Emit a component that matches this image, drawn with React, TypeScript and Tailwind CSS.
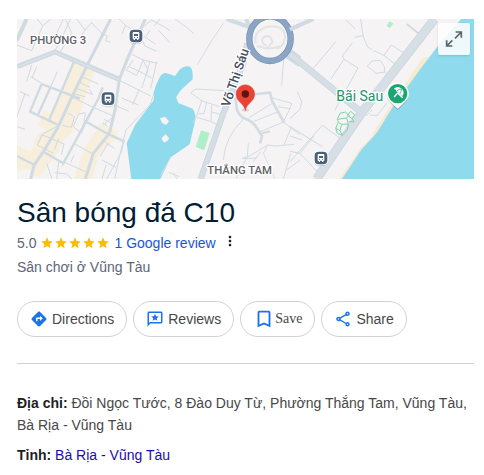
import React, { useState } from 'react';
import { MdBookmarkBorder, MdDirections, MdMoreVert, MdOutlineShare, MdStar } from 'react-icons/md';

const actionClass =
  "inline-flex h-9 items-center rounded-full border border-[#d2d2d2] bg-white px-3 text-sm text-[#474747] hover:bg-gray-50";

const BusStop = ({ x, y }: { x: number; y: number }) => (
  <g transform={`translate(${x} ${y})`} stroke="none">
    <rect x="-21" y="-18" width="42" height="42" rx="13" fill="#000" opacity="0.16" />
    <rect x="-22" y="-22" width="44" height="44" rx="14" fill="#fff" />
    <rect x="-19" y="-19" width="38" height="38" rx="12" fill="#4a6078" />
    <path d="M-10 -9q0 -3 3 -3h14q3 0 3 3v17h-3v4h-4v-4h-6v4h-4v-4h-3z" fill="#fff" />
    <path d="M-6 -6h12v6h-12zM-6 4h3v2h-3zM3 4h3v2h-3z" fill="#4a6078" />
  </g>
);

// Drawn on a grid of three units per pixel, in three side by side sections
const PlaceMap = () => (
  <svg
    viewBox="0 0 1371 480"
    preserveAspectRatio="xMidYMid slice"
    className="block h-40 w-full bg-[#f5f3f4]"
    role="img"
    aria-label="Sân bóng đá C10"
  >
    {/* West: Phường 3 */}
    <g transform="translate(-51 -27)" fill="none" stroke="#d0dae1" strokeLinejoin="round">
      <g fill="#f7efdc" stroke="none">
        <path d="M222 158L285 184L272 215L252 270L238 318L212 308L226 330L216 372L190 390L172 428L132 484L118 501L92 495L100 476L51 482V407L92 424L112 376L140 358L116 346L130 300L158 310L190 245Z" />
        <path d="M300 342L355 362L344 390L318 410L296 436L276 507H224L240 452L258 408L280 374Z" />
      </g>
      <g strokeWidth="3">
        <path d="M51 105L95 122L128 48L112 27M80 27L51 96M128 48L152 27M128 85L160 92L190 27M196 27L215 68L180 128M211 27L182 92L165 122M230 27L255 60L238 86M255 60L275 38L305 70L322 78L317 92L332 97" />
        <path d="M357 27L376 46L430 78L466 102M376 46L366 72M430 50L455 30L495 52L510 62M420 78L435 108L470 124M450 60L438 80M475 60L510 98M395 133L430 150L472 160M388 170L430 190L455 204M400 150L378 180L410 196L430 150M428 148L444 180L425 234M450 154L438 194M470 155L452 236M360 212L452 258M418 238L398 284M365 264L415 285M480 27L462 48" />
        <path d="M95 165L80 215M92 200L125 220M110 170L96 204M172 185L150 235M60 245L88 258M75 250L51 320M245 200L295 222M236 216L270 232M230 235L278 254L268 238M225 252L255 260M310 235L296 265M218 262L280 292L340 318M350 288L386 304M280 292L260 325L244 370M312 328L332 338M307 338L322 348M340 320L310 345" />
        <path d="M256 308L236 312L220 350L240 366L256 330M256 312L252 332L265 330M204 310L224 320L214 352L186 346M126 374L112 405L160 430M126 374L192 402L184 434M170 350L128 372L115 398M176 385L163 420M225 402L278 432M310 392L344 416M372 392L365 424L320 507M326 398L300 440M306 450L348 472M318 465L306 507M222 435L212 458M190 455L256 485M176 455L170 507M165 488L200 492L216 507M140 460L156 507M200 440L186 470M52 350L75 358M466 238L450 285L378 360L362 424L344 507" />
      </g>
      <g strokeWidth="7">
        <path d="M222 155L145 335M125 222L90 305L175 345M125 222L240 266M150 235L115 312M308 232L296 264L258 335L190 460L130 425M258 335L328 374L374 395" />
        <path d="M51 438L102 464" />
      </g>
      <path d="M332 27L262 165L215 262L175 350L130 425L102 466L92 507M436 27L385 140L358 208L345 300L328 370L280 430L256 507" strokeWidth="9" />
      <path d="M80 27L51 90" strokeWidth="12" />
      <path d="M51 170L165 126L358 208" strokeWidth="15" />
      <path d="M51 171L165 127L358 209" stroke="#e5ecf0" strokeWidth="2" />
      <BusStop x={408} y={78} />
      <BusStop x={324} y={266} />
    </g>

    {/* Centre: the lake and Thắng Tam */}
    <g transform="translate(279 -27)" fill="none" stroke="#d3dce2" strokeLinejoin="round">
      <path
        d="M50 400L75 345L128 275Q134 268 131 248Q136 225 150 200Q158 188 167 189L195 198L210 178Q224 166 240 170Q250 178 248 208L213 240L198 262L205 279L248 296Q258 310 256 330L239 403L182 442L151 507H64Z"
        fill="#90daee"
        stroke="none"
      />
      <path d="M150 325L165 320L177 334L168 345L156 339ZM155 384L166 373L177 383L175 390L164 398L156 391Z" fill="#f5f3f4" stroke="none" />
      <path d="M273 361L299 369L283 421L257 411Z" fill="#b0eec9" stroke="none" />
      <g strokeWidth="3">
        <path d="M195 27L230 52L252 72M340 40L305 92L262 164M182 442L152 496M176 487L208 500M190 490L202 507M242 248L258 237L362 243M242 248L275 272L328 290M275 272L262 312L250 338M290 278L282 310L262 312M305 285L303 335L260 322M303 335L322 344M305 306L334 314" />
        <path d="M521 148L515 227M480 262L545 280L540 296L520 335M540 296L505 290M490 278L418 322M505 305L432 334M520 336L445 368M520 336L570 374M400 328Q345 380 340 450M415 400L412 440L396 446L440 444M473 405L410 443L378 507M473 405L496 408L552 403M473 405L460 430L495 507M452 425L430 455M542 430L520 507M570 450L530 480M545 350L530 385L522 404" />
        <path d="M438 100Q430 80 446 64Q470 45 500 50Q525 56 525 80Q524 108 500 116M442 108L470 116L488 96L480 80Q464 74 456 90Q456 104 470 106M440 108Q480 122 510 108" stroke="#e3e4e6" strokeWidth="6" />
      </g>
      <path d="M376 262L380 295Q385 315 402 325Q430 334 442 356L456 378L450 400M412 260L440 252L480 248L486 272L522 338" strokeWidth="8" />
      <path d="M456 370L480 364" strokeWidth="6" />
      <path d="M412 100L400 160L340 310L272 507" stroke="#c8d3db" strokeWidth="18" />
      <path d="M412 100L400 160L340 310L272 507" stroke="#d4dee4" strokeWidth="14" />
      <path d="M350 27L420 52M408 27L426 62M535 60L570 45M530 140L570 166M538 120L570 144" stroke="#d0dbe2" strokeWidth="12" />
      <ellipse cx="480" cy="86" rx="62" ry="67" stroke="#728fb5" strokeWidth="19" />
      <ellipse cx="480" cy="86" rx="62" ry="67" stroke="#8ba5c5" strokeWidth="15" />
    </g>

    {/* East: the beach and the sea */}
    <g transform="translate(819 -27)" fill="none" stroke="#d0dae1" strokeLinejoin="round">
      <path d="M512 27L450 98L418 140L398 144L380 170L300 290L256 358L244 382L212 414L148 507H552V27Z" fill="#f6ead0" stroke="none" />
      <path d="M514 27L446 106L396 170L310 288L262 366L250 380L215 418L156 507H552V27Z" fill="#90daee" stroke="none" />
      <path d="M298 34L310 40L300 55L290 48Z" fill="#b0eec9" stroke="none" />
      <g strokeWidth="3">
        <path d="M138 94L70 175M168 30L196 57M212 27L219 77L193 82M219 77L232 110L246 119M187 98L157 138L162 148L122 208M162 148L204 174L135 300M252 122L282 136L318 165M282 136L304 105L344 130M232 168L246 153L270 151L283 170L284 186L258 190ZM284 186L294 195M240 315L262 316L290 280M246 300L228 318" />
        <path d="M22 245L35 275L30 298L0 325M0 350L97 410M97 346L0 455M97 346L155 388M36 390L0 378M0 424L30 430L95 500M30 430L72 378M155 388L118 436" />
      </g>
      <path d="M350 42L388 72" strokeWidth="6" />
      <path d="M0 58L70 27" strokeWidth="12" />
      <path d="M0 132L215 308" stroke="#c8d3db" strokeWidth="20" />
      <path d="M434 27L215 308L80 507" stroke="#c8d3db" strokeWidth="27" />
      <path d="M434 27L215 308L80 507" stroke="#d6dfe6" strokeWidth="23" />
      <path d="M0 132L215 308" stroke="#d6dfe6" strokeWidth="16" />
      <g stroke="#7fd3ac" strokeWidth="3">
        <path d="M150 310L166 306L178 316L170 324L175 342L155 343L145 337L137 355L142 370L157 376L172 360L175 342M150 310L142 328L145 337M155 343L150 362L157 376M182 304L194 314L186 326L172 316ZM186 326L192 336L176 334M142 328L170 324M137 355L150 362" />
      </g>
      <BusStop x={93} y={444} />
      <path d="M323 222a33 33 0 0 1 22 57l-22 21l-22 -21a33 33 0 0 1 22 -57z" fill="#000" opacity="0.22" stroke="none" />
      <path d="M323 218a33 33 0 0 1 22 58l-22 20l-22 -20a33 33 0 0 1 22 -58z" fill="#fff" stroke="none" />
      <circle cx="323" cy="251" r="29" fill="#1aa673" stroke="none" />
      <g transform="translate(325 247) rotate(42)">
        <path d="M-17 2Q-16 -14 0 -15Q16 -14 17 2Q12 -3 6 2Q0 -3 -6 2Q-12 -3 -17 2Z" fill="#fff" stroke="none" />
        <path d="M0 0V19" stroke="#fff" strokeWidth="4" />
        <path d="M-6 1Q-5 -9 0 -14Q5 -9 6 1" stroke="#1aa673" strokeWidth="2" />
      </g>
      <path d="M324 250L338 263" stroke="#fff" strokeWidth="4" />
    </g>

    {/* Labels */}
    <g
      fontFamily="Roboto, sans-serif"
      fontWeight="500"
      stroke="#fff"
      strokeWidth="8"
      strokeLinejoin="round"
      style={{ paintOrder: 'stroke' }}
    >
      <text x="39" y="76" fontSize="34" fill="#5f6368">PHƯỜNG 3</text>
      <text x="571" y="466" fontSize="34" fill="#5f6368">THẮNG TAM</text>
      <text x="958" y="246" fontSize="42" fontWeight="400" fill="#24916b">Bãi Sau</text>
      <text transform="translate(637 266) rotate(-71)" fontSize="38" fill="#3f4d62">Võ Thị Sáu</text>
    </g>

    {/* Marker of the place */}
    <g transform="translate(685 225)">
      <ellipse cx="0" cy="48" rx="11" ry="5" fill="#000" opacity="0.12" />
      <path d="M0 50C-3 28 -28 24 -28 0A28 28 0 0 1 28 0C28 24 3 28 0 50Z" fill="#ea4335" stroke="#d33426" strokeWidth="1" />
      <circle r="11" fill="#5c1512" />
    </g>
  </svg>
);

const ReviewIcon = () => (
  <svg viewBox="0 0 24 24" className="h-[18px] w-[18px] text-[#1a73e8]" fill="currentColor" aria-hidden="true">
    <path d="M20 2H4c-1.1 0-2 .9-2 2v18l4-4h14c1.1 0 2-.9 2-2V4c0-1.1-.9-2-2-2zm0 14H5.2L4 17.2V4h16v12z" />
    <path d="M12 5l1.4 3.3 3.6.3-2.7 2.3.8 3.5-3.1-1.9-3.1 1.9.8-3.5L7 8.6l3.6-.3z" />
  </svg>
);

const App = () => {
  const [saved, setSaved] = useState(false);

  return (
    <main className="bg-white pt-[19px] pr-[10px] pb-2 pl-[17px] font-['Liberation_Sans',Arial,sans-serif] text-sm">
      <div className="relative">
        <PlaceMap />
        <button
          type="button"
          aria-label="Expand map"
          className="absolute top-1 right-1 h-8 w-8 rounded-xs bg-white/85 shadow-sm"
        >
          <svg viewBox="0 0 96 96" className="h-8 w-8" fill="none" stroke="#5f6368" strokeWidth="5" aria-hidden="true">
            <path d="M53 27H70V44M70 27L51 46M26 52V69H43M26 69L43 52" />
          </svg>
        </button>
      </div>

      <header className="mt-4">
        <h1 className="text-[28px] leading-9 text-[#001d35]">Sân bóng đá C10</h1>
        <div className="flex h-6 items-center text-[#5e6478]">
          <span>5.0</span>
          <span className="ml-1 flex text-[#fbbc04]" role="img" aria-label="5.0 / 5">
            {[1, 2, 3, 4, 5].map((star) => (
              <MdStar key={star} size={14} />
            ))}
          </span>
          <a href="#reviews" className="ml-1 text-[#1558d6] hover:underline">
            1 Google review
          </a>
          <button type="button" aria-label="More" className="ml-1.5 -mt-1 text-[#1f1f1f]">
            <MdMoreVert size={16} />
          </button>
        </div>
        <p className="leading-6 text-[#5e6478]">Sân chơi ở Vũng Tàu</p>
      </header>

      <div className="mt-[22px] flex flex-wrap gap-1.5">
        <button type="button" className={`${actionClass} gap-1`}>
          <MdDirections size={18} className="text-[#1a73e8]" />
          Directions
        </button>
        <button type="button" className={`${actionClass} gap-1`}>
          <ReviewIcon />
          Reviews
        </button>
        <button
          type="button"
          aria-pressed={saved}
          onClick={() => setSaved(!saved)}
          className={`${actionClass} font-['Liberation_Serif','Times_New_Roman',serif]`}
        >
          <MdBookmarkBorder size={22} className="text-[#1a73e8]" />
          Save
        </button>
        <button type="button" className={`${actionClass} gap-1`}>
          <MdOutlineShare size={18} className="text-[#1a73e8]" />
          Share
        </button>
      </div>

      <hr className="mt-[26px] border-t border-[#d2d2d2]" />

      <section className="mt-7 leading-[22px] text-[#474747]">
        <p>
          <b className="text-[#1f1f1f]">Địa chỉ:</b> Đồi Ngọc Tước, 8 Đào Duy Từ, Phường Thắng Tam, Vũng Tàu, Bà Rịa - Vũng Tàu
        </p>
        <p className="mt-2">
          <b className="text-[#1f1f1f]">Tỉnh:</b>{' '}
          <a href="#province" className="text-[#1a0dab] hover:underline">
            Bà Rịa - Vũng Tàu
          </a>
        </p>
      </section>
    </main>
  );
};

export default App;
